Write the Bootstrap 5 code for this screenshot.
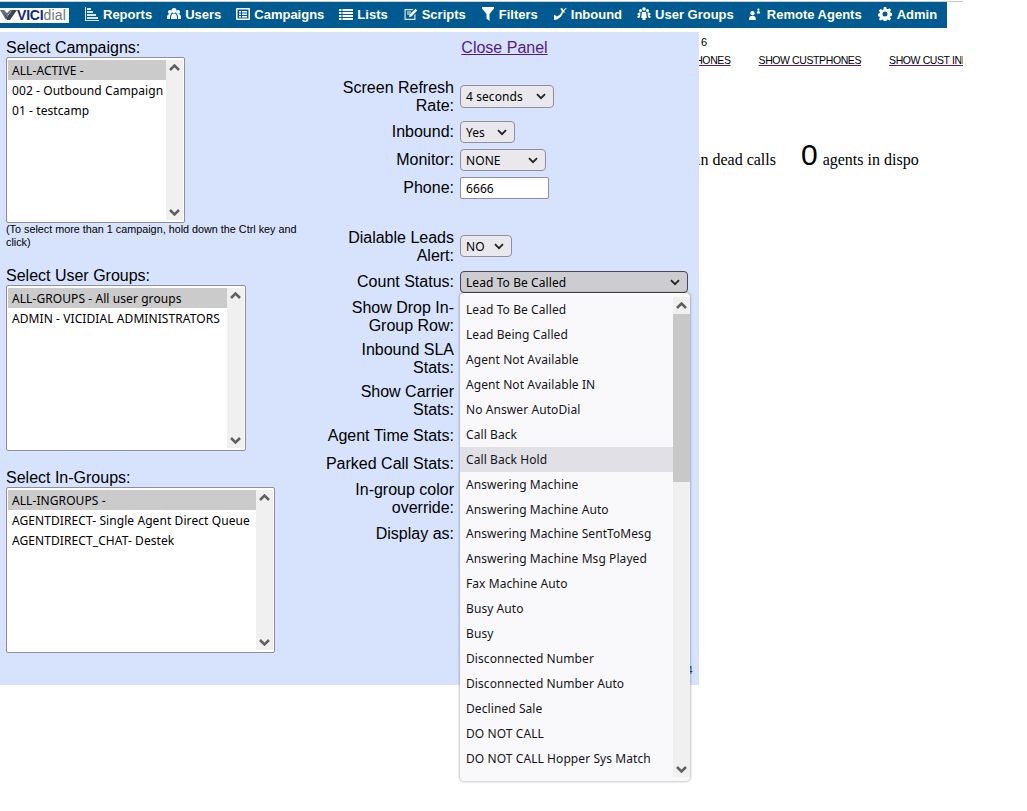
<!DOCTYPE html>
<html lang="en">
<head>
<meta charset="utf-8">
<title>VICIdial</title>
<link rel="stylesheet" href="https://cdn.jsdelivr.net/npm/bootstrap@5.3.0/dist/css/bootstrap.min.css">
<style>
body{background:#fff;color:#000;font-family:"Liberation Sans",Arial,sans-serif;font-size:16px;line-height:18px;height:811px;overflow:hidden}
.page-wrap{width:963px;border-top:1px solid #ccc;margin-top:1px;overflow:hidden;height:810px}
.vd-topbar{width:947px;height:26px;background:#015b91;color:#fff;font-size:13px;font-weight:700;white-space:nowrap}
.vd-logo{width:69px;height:15px;background:#fff;line-height:15px;font-weight:700;font-size:14px;letter-spacing:-.2px;overflow:hidden;flex:none}
.vd-logo svg{flex:none}
.vd-logo .vd-vici{color:#102a7a}
.vd-logo .vd-dial{color:#6f757c;font-weight:400;letter-spacing:.2px}
.vd-topnav{margin-left:16px;gap:15px}
.vd-topitem{color:#fff;text-decoration:none}
.vd-topitem:hover{color:#fff}
.vd-topitem svg{width:14px;height:14px;fill:#fff;flex:none;margin-top:-3px}
.vd-gap6{gap:6px}.vd-gap5{gap:5px;margin-left:1px}.vd-w12 svg{width:12px}.vd-w15 svg{width:15px}
.vd-under{padding-top:8px;height:780px}
.vd-date{padding-left:701px;font-size:11px;line-height:13px;height:13px}
.vd-links{padding-left:655px;font-size:10.5px;letter-spacing:-.4px;line-height:13px;margin-top:5px;white-space:nowrap;gap:28px}
.vd-links a{color:#000;text-decoration-color:#551a8b}
.vd-stats{padding-left:696px;font-family:"Liberation Serif",serif;font-size:16px;margin-top:70px;line-height:36px;white-space:nowrap}
.vd-big{font-family:"Liberation Sans",sans-serif;font-size:30px;margin-left:25px;margin-right:5px}
.vd-tiny{position:absolute;left:687px;top:665px;font-size:10px;line-height:12px;color:#2a3f9d;z-index:1}
.vd-panel{position:absolute;left:0;top:32px;width:699px;height:653px;background:#d7e3fd}
.vd-left{width:306px;padding:7px 0 0 6px}
.vd-pick{height:166px;background:#fff;border:1px solid #8f8f9d;border-radius:2px;padding:2px 1px;font:12px/21px "Noto Sans",sans-serif;letter-spacing:.08px;white-space:nowrap;overflow:hidden}
.w-camp{width:179px}.w-grp{width:240px}.w-ing{width:269px}
.vd-pick-rows{min-width:0}
.vd-pick-row{padding-left:4px;height:20px}
.vd-pick-row.vd-on{background:#cbcbcb}
.vd-bar{width:17px;flex:none;background:#f0f0f0}
.vd-bar svg,.vd-mbar svg{width:11px;height:7px;fill:none;stroke:#606060;stroke-width:2.5;display:block;margin:0 auto;flex:none}
.vd-note{font-size:10.8px;line-height:13px;margin-bottom:18px}
.vd-headgap{margin-top:18px}
.vd-right{width:393px}
.vd-close{padding:7px 0 0 4px;height:42px;color:#551a8b;text-align:center;display:block}
.vd-close:hover{color:#551a8b}
.vd-row{min-height:24px;margin-top:4px}
.vd-row label{width:130px;margin:0 6px 0 18px;flex:none;text-align:right}
.vd-row label.vd-lo{padding-top:1px;margin-bottom:-1px}
.vd-m5{margin-top:5px}.vd-m6{margin-top:6px}.vd-m28{margin-top:28px}
.form-select.vd-sel{width:auto;font:12px/16px "Noto Sans",sans-serif;letter-spacing:.08px;color:#000;background-color:#e9e9ed;background-image:url("data:image/svg+xml,%3csvg xmlns='http://www.w3.org/2000/svg' viewBox='0 0 10 7'%3e%3cpath fill='none' stroke='%23222' stroke-width='1.8' d='M1 1.200l4 4 4-4'/%3e%3c/svg%3e");border:1px solid #8f8f9d;border-radius:4px;padding:3px 24px 1px 5px;background-position:right 7px center;background-size:10px 7px;height:22px}
.vd-sel.vd-tall{height:23px}
.vd-sel.vd-open{background-color:#cdcdd1;border-color:#48484e;width:228px}
.vd-sel.w94{width:94px}.vd-sel.w55{width:55px}.vd-sel.w86{width:86px}.vd-sel.w52{width:52px}
.form-control.vd-input{width:89px;height:22px;font:12px/16px "Noto Sans",sans-serif;letter-spacing:.08px;padding:2px 5px;border:1px solid #8f8f9d;border-radius:2px;color:#000;background:#fff}
.vd-menu.dropdown-menu{position:absolute;display:flex;left:0;top:22px;width:230px;height:488px;padding:0;background:#f9f9fb;border:0;border-radius:4px;box-shadow:0 0 3px rgba(0,0,0,.45);font:12px/25px "Noto Sans",sans-serif;letter-spacing:.08px;z-index:5;overflow:hidden;margin:0}
.vd-menu-rows{padding-top:4px;width:213px}
.vd-menu .dropdown-item{padding:0 6px;height:24.95px;color:#15141a;line-height:25px}
.vd-menu .dropdown-item.vd-hover{background:#e0e0e6}
.vd-mbar{width:17px;flex:none;background:#f0f0f0;margin-top:4px;margin-bottom:4px}
.vd-up{margin-top:5px!important}
.vd-down{margin-bottom:4px!important}
.vd-thumb{height:168px;background:#c8c8c8;margin-top:5px}
</style>
</head>
<body>
<div class="page-wrap">
  <div class="vd-topbar d-flex align-items-center">
    <div class="vd-logo d-flex align-items-center">
      <svg width="17" height="15" viewBox="0 0 17 15"><path d="M0 2h4l3 3 3-3h2l-4 5-2 5z" fill="#66707a"/><path d="M4 5l3 4 3-4 2-3h5l-7 10H7z" fill="#3c4650"/></svg>
      <span class="vd-vici">VICI</span><span class="vd-dial">dial</span>
    </div>
    <div class="d-flex align-items-center vd-topnav">
      <a class="vd-topitem d-flex align-items-center gap-1" href="#"><svg viewBox="0 0 14 14"><path d="M0 0h1v13h13v1H0zM2 1h4v2H2zM2 4h6v2H2zM2 7h9v2H2zM2 10h11v2H2z" opacity=".85"/></svg>Reports</a>
      <a class="vd-topitem d-flex align-items-center gap-1" href="#"><svg viewBox="0 0 14 14"><circle cx="3" cy="5" r="2"/><circle cx="11" cy="5" r="2"/><circle cx="7" cy="3.5" r="2.5"/><path d="M0 11c0-3 1-4 3-4h1c-1 1-1 3-1 5H0zM14 11c0-3-1-4-3-4h-1c1 1 1 3 1 5h3zM4 12c0-4 1-5.500 3-5.500s3 1.500 3 5.500z"/></svg>Users</a>
      <a class="vd-topitem d-flex align-items-center gap-1" href="#"><svg viewBox="0 0 14 14"><path fill-rule="evenodd" d="M1 1h12a1 1 0 0 1 1 1v10a1 1 0 0 1-1 1H1a1 1 0 0 1-1-1V2a1 1 0 0 1 1-1zm.500 1.500v9h11v-9zM3 4h2v1.500H3zM6 4h5v1.500H6zM3 6.500h2V8H3zM6 6.500h5V8H6zM3 9h2v1.500H3zM6 9h5v1.500H6z"/></svg>Campaigns</a>
      <a class="vd-topitem d-flex align-items-center gap-1" href="#"><svg viewBox="0 0 14 14"><path d="M0 2h2.500v2H0zM3.500 2H14v2H3.500zM0 5h2.500v2H0zM3.500 5H14v2H3.500zM0 8h2.500v2H0zM3.500 8H14v2H3.500zM0 11h2.500v2H0zM3.500 11H14v2H3.500z"/></svg>Lists</a>
      <a class="vd-topitem d-flex align-items-center gap-1 vd-w15" href="#"><svg viewBox="0 0 14 14"><path d="M1 2h9l-1.200 1.200H2.200v8.600h8.600V8l1.200-1.200V13H1z" opacity=".85"/><path d="M3.500 4.500h4v1h-4zM3.500 6.500h3v1h-3zM5.500 10l.600-2.400L12 1.700l1.800 1.800-5.900 5.900z"/></svg>Scripts</a>
      <a class="vd-topitem d-flex align-items-center gap-1" href="#"><svg viewBox="0 0 14 14"><path d="M1 0h12v1.500L8.500 7v7L5.500 11.500V7L1 1.500z"/></svg>Filters</a>
      <a class="vd-topitem d-flex align-items-center gap-1" href="#"><svg viewBox="0 0 14 14"><path d="M1 8c1 0 2 .5 2.500 1.500C6 9 8.500 6.500 9 4c-1-.5-1.500-1.500-1.500-2.500L9.500 1c.8 3 .8 6-1.500 8.500-2.500 2.500-4.500 3.500-7 3.500z"/><path d="M13.500 1L11 3.500 12.500 5H9V1.500L10.300 2.800 12.800.3z" transform="translate(0 .5)"/></svg>Inbound</a>
      <a class="vd-topitem d-flex align-items-center gap-1" href="#"><svg viewBox="0 0 14 14"><circle cx="7" cy="2" r="1.800"/><circle cx="3.500" cy="3.500" r="1.500"/><circle cx="10.500" cy="3.500" r="1.500"/><circle cx="1.800" cy="7" r="1.300"/><circle cx="12.200" cy="7" r="1.300"/><path d="M5 5h4l.800 6H8.500v2h-3v-2H4.200zM2 5.500h1.500L3 10H1.500zM10.500 5.500H12l.500 4.500H11zM.3 9h2l.2 2H.8zM11.700 9h2l-.5 2h-1.700z"/></svg>User Groups</a>
      <a class="vd-topitem d-flex align-items-center vd-gap6 vd-w12" href="#"><svg viewBox="0 0 14 14"><circle cx="4" cy="6" r="2.500"/><path d="M0 14c0-3.500 1-5 4-5s4 1.500 4 5z"/><circle cx="11" cy="2" r="1.300"/><path d="M9 6.500c0-2 .5-3 2-3s2 1 2 3z"/></svg>Remote Agents</a>
      <a class="vd-topitem d-flex align-items-center vd-gap5" href="#"><svg viewBox="0 0 14 14"><path fill-rule="evenodd" d="M5.800 0h2.400l.4 1.800 1.200.5 1.600-1 1.700 1.700-1 1.600.5 1.200 1.800.4v2.400l-1.800.4-.5 1.200 1 1.600-1.700 1.700-1.600-1-1.200.5-.4 1.800H5.800l-.4-1.800-1.200-.5-1.600 1L.9 12.400l1-1.600-.5-1.200L-.4 9.200V6.800l1.800-.4.500-1.200-1-1.600L2.600 1.900l1.600 1 1.200-.5zM7 4.600a2.500 2.500 0 1 0 0 5 2.500 2.500 0 0 0 0-5z"/></svg>Admin</a>
    </div>
  </div>

  <div class="vd-under">
    <div class="vd-date">6</div>
    <div class="vd-links d-flex">
      <a href="#">SHOW PHONES</a>
      <a href="#">SHOW CUSTPHONES</a>
      <a href="#">SHOW CUST INFO</a>
    </div>
    <div class="vd-stats"><span>in dead calls</span><span class="vd-big">0</span><span>agents in dispo</span></div>
    <div class="vd-tiny">4</div>
  </div>

  <div class="vd-panel d-flex">
    <div class="vd-left flex-none">
      <div>Select Campaigns:</div>
      <div class="vd-pick w-camp d-flex">
        <div class="vd-pick-rows flex-grow-1">
          <div class="vd-pick-row vd-on">ALL-ACTIVE -</div>
          <div class="vd-pick-row">002 - Outbound Campaign</div>
          <div class="vd-pick-row">01 - testcamp</div>
        </div>
        <div class="vd-bar d-flex flex-column justify-content-between py-1">
          <svg viewBox="0 0 11 7"><path d="M1 6l4.500-4.500L10 6"/></svg>
          <svg viewBox="0 0 11 7"><path d="M1 1l4.500 4.500L10 1"/></svg>
        </div>
      </div>
      <div class="vd-note">(To select more than 1 campaign, hold down the Ctrl key and click)</div>
      <div>Select User Groups:</div>
      <div class="vd-pick w-grp d-flex">
        <div class="vd-pick-rows flex-grow-1">
          <div class="vd-pick-row vd-on">ALL-GROUPS - All user groups</div>
          <div class="vd-pick-row">ADMIN - VICIDIAL ADMINISTRATORS</div>
        </div>
        <div class="vd-bar d-flex flex-column justify-content-between py-1">
          <svg viewBox="0 0 11 7"><path d="M1 6l4.500-4.500L10 6"/></svg>
          <svg viewBox="0 0 11 7"><path d="M1 1l4.500 4.500L10 1"/></svg>
        </div>
      </div>
      <div class="vd-headgap">Select In-Groups:</div>
      <div class="vd-pick w-ing d-flex">
        <div class="vd-pick-rows flex-grow-1">
          <div class="vd-pick-row vd-on">ALL-INGROUPS -</div>
          <div class="vd-pick-row">AGENTDIRECT- Single Agent Direct Queue</div>
          <div class="vd-pick-row">AGENTDIRECT_CHAT- Destek</div>
        </div>
        <div class="vd-bar d-flex flex-column justify-content-between py-1">
          <svg viewBox="0 0 11 7"><path d="M1 6l4.500-4.500L10 6"/></svg>
          <svg viewBox="0 0 11 7"><path d="M1 1l4.500 4.500L10 1"/></svg>
        </div>
      </div>
    </div>

    <div class="vd-right">
      <a class="vd-close" href="#">Close Panel</a>
      <div class="vd-row d-flex align-items-center"><label class="vd-lo">Screen Refresh Rate:</label><select class="form-select vd-sel vd-tall w94"><option>4 seconds</option></select></div>
      <div class="vd-row vd-m6 d-flex align-items-center"><label>Inbound:</label><select class="form-select vd-sel w55"><option>Yes</option></select></div>
      <div class="vd-row d-flex align-items-center"><label>Monitor:</label><select class="form-select vd-sel w86"><option>NONE</option></select></div>
      <div class="vd-row d-flex align-items-center"><label>Phone:</label><input class="form-control vd-input" value="6666"></div>
      <div class="vd-row vd-m28 d-flex align-items-center"><label class="vd-lo">Dialable Leads Alert:</label><select class="form-select vd-sel w52"><option>NO</option></select></div>
      <div class="vd-row vd-m6 d-flex align-items-center"><label>Count Status:</label>
        <div class="position-relative">
          <select class="form-select vd-sel vd-open"><option>Lead To Be Called</option></select>
          <div class="dropdown-menu show vd-menu">
            <div class="vd-menu-rows">
              <a class="dropdown-item" href="#">Lead To Be Called</a>
              <a class="dropdown-item" href="#">Lead Being Called</a>
              <a class="dropdown-item" href="#">Agent Not Available</a>
              <a class="dropdown-item" href="#">Agent Not Available IN</a>
              <a class="dropdown-item" href="#">No Answer AutoDial</a>
              <a class="dropdown-item" href="#">Call Back</a>
              <a class="dropdown-item vd-hover" href="#">Call Back Hold</a>
              <a class="dropdown-item" href="#">Answering Machine</a>
              <a class="dropdown-item" href="#">Answering Machine Auto</a>
              <a class="dropdown-item" href="#">Answering Machine SentToMesg</a>
              <a class="dropdown-item" href="#">Answering Machine Msg Played</a>
              <a class="dropdown-item" href="#">Fax Machine Auto</a>
              <a class="dropdown-item" href="#">Busy Auto</a>
              <a class="dropdown-item" href="#">Busy</a>
              <a class="dropdown-item" href="#">Disconnected Number</a>
              <a class="dropdown-item" href="#">Disconnected Number Auto</a>
              <a class="dropdown-item" href="#">Declined Sale</a>
              <a class="dropdown-item" href="#">DO NOT CALL</a>
              <a class="dropdown-item" href="#">DO NOT CALL Hopper Sys Match</a>
            </div>
            <div class="vd-mbar d-flex flex-column">
              <svg viewBox="0 0 11 7" class="vd-up"><path d="M1 6l4.500-4.500L10 6"/></svg>
              <div class="vd-thumb"></div>
              <svg viewBox="0 0 11 7" class="mt-auto vd-down"><path d="M1 1l4.500 4.500L10 1"/></svg>
            </div>
          </div>
        </div>
      </div>
      <div class="vd-row d-flex align-items-center"><label class="vd-lo">Show Drop In-Group Row:</label></div>
      <div class="vd-row vd-m6 d-flex align-items-center"><label class="vd-lo">Inbound SLA Stats:</label></div>
      <div class="vd-row vd-m6 d-flex align-items-center"><label class="vd-lo">Show Carrier Stats:</label></div>
      <div class="vd-row vd-m5 d-flex align-items-center"><label class="vd-lo">Agent Time Stats:</label></div>
      <div class="vd-row d-flex align-items-center"><label class="vd-lo">Parked Call Stats:</label></div>
      <div class="vd-row vd-m5 d-flex align-items-center"><label class="vd-lo">In-group color override:</label></div>
      <div class="vd-row vd-m5 d-flex align-items-center"><label class="vd-lo">Display as:</label></div>
    </div>
  </div>
</div>
<script src="https://cdn.jsdelivr.net/npm/bootstrap@5.3.0/dist/js/bootstrap.bundle.min.js"></script>
</body>
</html>
